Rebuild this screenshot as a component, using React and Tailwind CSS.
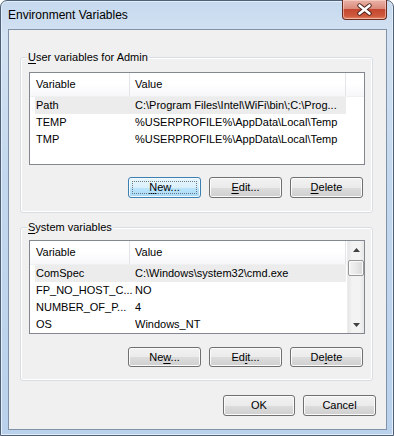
import React from "react";

function Btn({ children, focused, w = "w-[73px]", h = "h-[21px]" }) {
  return (
    <div
      className={`${w} ${h} relative flex items-center justify-center rounded-[3px] border text-[11px] leading-none text-black ${
        focused
          ? "border-[#3c7fb1] bg-[linear-gradient(#eaf6fd_0%,#d9f0fc_50%,#bee6fd_50%,#a7d9f5_100%)] shadow-[inset_0_0_0_1px_#f4fbff]"
          : "border-[#707070] bg-[linear-gradient(#f2f2f2_0%,#ebebeb_50%,#dddddd_50%,#cfcfcf_100%)] shadow-[inset_0_0_0_1px_#fbfbfb]"
      }`}
    >
      {focused && (
        <div className="absolute inset-[3px] border border-dotted border-[#6a7a88]" />
      )}
      <span>{children}</span>
    </div>
  );
}

function U({ children }) {
  return <span className="underline underline-offset-[2px]">{children}</span>;
}

function Arrow({ down }) {
  return (
    <div className="h-[17px] flex items-center justify-center">
      <svg width="7" height="4" viewBox="0 0 7 4">
        {down ? (
          <path d="M0 0 L7 0 L3.5 4 Z" fill="#404040" />
        ) : (
          <path d="M3.5 0 L7 4 L0 4 Z" fill="#404040" />
        )}
      </svg>
    </div>
  );
}

function Scrollbar() {
  return (
    <div className="w-[17px] h-full flex flex-col bg-[linear-gradient(90deg,#e6e6e6,#f3f3f3_25%,#f3f3f3_75%,#e6e6e6)] border-l border-[#ececec]">
      <Arrow />
      <div className="h-[16px] mt-[2px] ml-[0px] w-[16px] rounded-[2px] border border-[#979797] bg-[linear-gradient(90deg,#f4f4f4,#e8e8e8_50%,#d9d9d9)] shadow-[inset_0_0_0_1px_#fafafa]" />
      <div className="flex-1" />
      <Arrow down />
    </div>
  );
}

function ListView({ rows, h, scroll }) {
  return (
    <div className={`w-[336px] ${h} border border-[#828790] bg-white flex overflow-hidden`}>
      <div className="flex-1 flex flex-col min-w-0">
        <div className="h-[24px] flex shrink-0 bg-[linear-gradient(#ffffff_0%,#ffffff_45%,#f6f7f8_100%)] border-b border-[#eef0f2] text-[11px] text-black">
          <div className="w-[99px] pl-[6px] flex items-center">Variable</div>
          <div className="w-px bg-[#e3e5e8]" />
          <div className="w-[215px] pl-[5px] flex items-center">Value</div>
          <div className="w-px bg-[#e3e5e8]" />
          <div className="flex-1" />
        </div>
        {rows.map((r, i) => (
          <div
            key={i}
            className={`ml-[5px] w-[311px] h-[17px] flex items-center text-[11px] text-black whitespace-nowrap ${
              i === 0 ? "bg-[#ececec]" : ""
            }`}
          >
            <div className="w-[100px] pl-[1px] overflow-hidden">{r[0]}</div>
            <div className="w-[210px] overflow-hidden">{r[1]}</div>
          </div>
        ))}
      </div>
      {scroll && <Scrollbar />}
    </div>
  );
}

function Group({ title, className, children }) {
  return (
    <div
      className={`relative ml-[11px] w-[353px] rounded-[3px] border border-[#d5dfe5] shadow-[inset_0_0_0_1px_#ffffff] px-[8px] ${className}`}
    >
      <div className="absolute left-[6px] top-[-8px] px-[1px] bg-[#f0f0f0] text-[11px] leading-[14px] text-black">
        {title}
      </div>
      {children}
    </div>
  );
}

export default function App() {
  const userRows = [
    ["Path", "C:\\Program Files\\Intel\\WiFi\\bin\\;C:\\Prog..."],
    ["TEMP", "%USERPROFILE%\\AppData\\Local\\Temp"],
    ["TMP", "%USERPROFILE%\\AppData\\Local\\Temp"],
  ];
  const sysRows = [
    ["ComSpec", "C:\\Windows\\system32\\cmd.exe"],
    ["FP_NO_HOST_C...", "NO"],
    ["NUMBER_OF_P...", "4"],
    ["OS", "Windows_NT"],
  ];
  return (
    <div className="w-[394px] h-[436px] overflow-hidden font-['Liberation_Sans',Arial,sans-serif]">
      <div className="w-[394px] h-[436px] flex flex-col rounded-t-[7px] border border-[#4f6178] bg-[linear-gradient(180deg,#c6d9ee_0%,#d3e2f2_8%,#c3d8ee_40%,#b9d1ec_100%)] shadow-[inset_0_0_0_1px_#e4eef8]">
        {/* Title bar */}
        <div className="h-[28px] flex items-start justify-between shrink-0">
          <div className="ml-[7px] mt-[7px] text-[12px] leading-[14px] text-black">
            Environment Variables
          </div>
          <div className="mr-[6px] mt-[-1px] w-[45px] h-[20px] rounded-b-[4px] border border-t-0 border-[#6b2a22] bg-[linear-gradient(#eab3a8_0%,#db8b7b_45%,#c4482f_50%,#cf5a3d_85%,#e48c6b_100%)] shadow-[inset_0_0_0_1px_rgba(255,220,210,0.55)] flex items-center justify-center">
            <svg width="17" height="13" viewBox="0 0 17 13">
              <path d="M3.5 2.5 L13.5 10.5 M13.5 2.5 L3.5 10.5" stroke="#4a1f1a" strokeWidth="4.4" strokeLinecap="round" />
              <path d="M3.5 2.5 L13.5 10.5 M13.5 2.5 L3.5 10.5" stroke="#ffffff" strokeWidth="2.6" strokeLinecap="round" />
            </svg>
          </div>
        </div>
        {/* Client */}
        <div className="ml-[7px] w-[379px] h-[401px] border border-[#8192a8] bg-[#f0f0f0] flex flex-col">
          <Group
            title={
              <>
                <U>U</U>ser variables for Admin
              </>
            }
            className="mt-[27px] h-[156px] pt-[14px]"
          >
            <ListView rows={userRows} h="h-[93px]" />
            <div className="mt-[12px] pr-[1px] flex justify-end gap-[8px]">
              <Btn focused>
                <U>N</U>ew...
              </Btn>
              <Btn>
                <U>E</U>dit...
              </Btn>
              <Btn>
                <U>D</U>elete
              </Btn>
            </div>
          </Group>
          <Group
            title={
              <>
                <U>S</U>ystem variables
              </>
            }
            className="mt-[14px] h-[154px] pt-[12px]"
          >
            <ListView rows={sysRows} h="h-[94px]" scroll />
            <div className="mt-[13px] pr-[1px] flex justify-end gap-[8px]">
              <Btn h="h-[20px]">
                Ne<U>w</U>...
              </Btn>
              <Btn h="h-[20px]">
                Ed<U>i</U>t...
              </Btn>
              <Btn h="h-[20px]">
                De<U>l</U>ete
              </Btn>
            </div>
          </Group>
          <div className="mt-[14px] pr-[10px] flex justify-end gap-[8px]">
            <Btn w="w-[72px]">OK</Btn>
            <Btn>Cancel</Btn>
          </div>
        </div>
      </div>
    </div>
  );
}
